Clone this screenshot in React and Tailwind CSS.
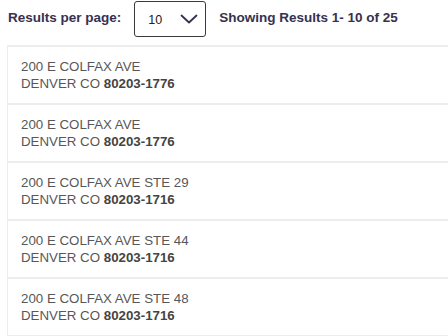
import React from 'react';

const addresses = [
  { street: '200 E COLFAX AVE', city: 'DENVER CO', zip: '80203-1776' },
  { street: '200 E COLFAX AVE', city: 'DENVER CO', zip: '80203-1776' },
  { street: '200 E COLFAX AVE STE 29', city: 'DENVER CO', zip: '80203-1716' },
  { street: '200 E COLFAX AVE STE 44', city: 'DENVER CO', zip: '80203-1716' },
  { street: '200 E COLFAX AVE STE 48', city: 'DENVER CO', zip: '80203-1716' },
];

const App = () => {
  return (
    <div className="w-[448px] h-[336px] overflow-hidden bg-white font-['Liberation_Sans',Arial,sans-serif]">
      {/* Pagination header */}
      <div className="flex items-center h-[37px] pl-2">
        <span className="text-[13.5px] font-bold text-[#36314f]">Results per page:</span>
        <div className="ml-[13px] flex items-center justify-between w-[72px] h-[36px] border border-[#3a3a3a] rounded-[3px] pl-[13px] pr-[7px]">
          <span className="text-[12.5px] text-[#222] mt-[3px]">10</span>
          <svg width="18" height="10" viewBox="0 0 18 10" fill="none" stroke="#36314f" strokeWidth="1.8" strokeLinecap="round" strokeLinejoin="round">
            <path d="M1.5 1.5 L9 8.5 L16.5 1.5" />
          </svg>
        </div>
        <span className="ml-[13px] text-[13.5px] font-bold text-[#36314f]">Showing Results 1- 10 of 25</span>
      </div>

      {/* Address list */}
      <div className="mt-[8px] ml-[7px] border-l border-t-2 border-[#ececec]">
        {addresses.map((a, i) => (
          <div key={i} className="h-[58px] flex flex-col justify-center pl-[13px] border-b-2 border-[#ececec] text-[13.3px] leading-[17px] text-[#575757]">
            <span>{a.street}</span>
            <span>
              {a.city} <span className="font-bold text-[#444]">{a.zip}</span>
            </span>
          </div>
        ))}
      </div>
    </div>
  );
};

export default App;
